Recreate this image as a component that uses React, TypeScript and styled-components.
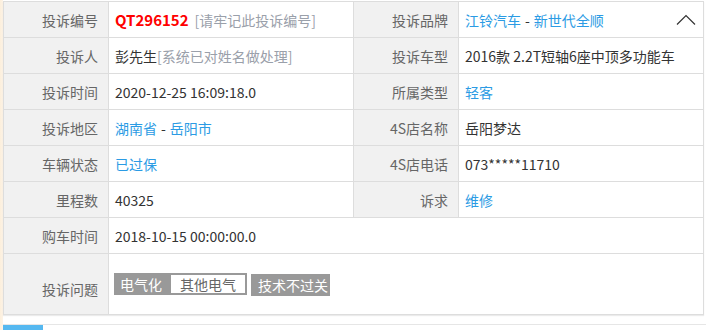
import React from "react";
import styled, { createGlobalStyle } from "styled-components";

const GlobalStyle = createGlobalStyle`
  html, body { margin: 0; padding: 0; background: #fff; }
  body { font-family: "Noto Sans CJK SC", "Microsoft YaHei", sans-serif; }
`;

const Page = styled.div`
  width: 706px;
  height: 330px;
  overflow: hidden;
  box-sizing: border-box;
  padding: 1px 0 0 3px;
  background: linear-gradient(to right, #fcefdc 0, #fdf3e6 3px, #ffffff 3px);
`;

const Table = styled.div`
  display: grid;
  grid-template-columns: 104px 244px 104px 244px;
  grid-template-rows: repeat(7, 35px) 60px;
  gap: 1px;
  width: fit-content;
  background: #dddddd;
  border: 1px solid #dddddd;
  box-shadow: 0 1px 1px rgba(0, 0, 0, 0.08);
`;

const Label = styled.div<{ $low?: boolean }>`
  display: flex;
  align-items: center;
  justify-content: flex-end;
  padding: ${(p) => (p.$low ? "9px 10px 0 0" : "0 10px 0 0")};
  background: #f1f1f1;
  color: #666;
  font-size: 14px;
  white-space: nowrap;
`;

const Value = styled.div<{ $span?: number }>`
  display: flex;
  align-items: center;
  padding: 0 0 0 6px;
  background: #fff;
  color: #333;
  font-size: 14px;
  white-space: nowrap;
  grid-column: ${(p) => (p.$span ? `span ${p.$span}` : "auto")};
`;

const Spread = styled(Value)`
  justify-content: space-between;
  padding-right: 7px;
`;

const Code = styled.span`
  color: #ff0000;
  font-weight: bold;
  font-size: 15px;
  margin-right: 6px;
`;

const Hint = styled.span`
  color: #9aa0aa;
`;

const Link = styled.span`
  color: #2b9be4;
`;

const Dash = styled.span`
  color: #333;
  margin: 0 4px;
`;

const Tags = styled.div`
  display: flex;
  align-items: center;
  gap: 4px;
  margin-left: -1px;
`;

const TagGroup = styled.div`
  display: inline-flex;
  align-items: stretch;
  padding: 2px;
  background: #999;
`;

const Seg = styled.span<{ $light?: boolean }>`
  display: inline-flex;
  align-items: center;
  height: 18px;
  font-size: 14px;
  line-height: 18px;
  padding: ${(p) => (p.$light ? "0 9px 0 9px" : "0 9px 0 4px")};
  background: ${(p) => (p.$light ? "#fff" : "transparent")};
  color: ${(p) => (p.$light ? "#666" : "#fff")};
`;

const Tag = styled.span`
  display: inline-flex;
  align-items: center;
  height: 22px;
  margin-top: 2px;
  padding: 0 2px 0 7px;
  background: #999;
  color: #fff;
  font-size: 14px;
`;

const TabBar = styled.div`
  margin-top: 9px;
  border-top: 1px solid #e6e6e6;
  height: 10px;
`;

const ActiveTab = styled.div`
  width: 40px;
  height: 6px;
  background: #55b8f0;
`;

const Chevron = () => (
  <svg width="20" height="13" viewBox="0 0 20 13" aria-hidden="true">
    <polyline points="1,11.5 10,2.5 19,11.5" fill="none" stroke="#333" strokeWidth="1.2" />
  </svg>
);

export default function App() {
  return (
    <>
      <GlobalStyle />
      <Page>
        <Table>
          <Label>投诉编号</Label>
          <Value>
            <Code>QT296152</Code>
            <Hint>[请牢记此投诉编号]</Hint>
          </Value>
          <Label>投诉品牌</Label>
          <Spread>
            <span>
              <Link>江铃汽车</Link>
              <Dash>-</Dash>
              <Link>新世代全顺</Link>
            </span>
            <Chevron />
          </Spread>

          <Label>投诉人</Label>
          <Value>
            彭先生<Hint>[系统已对姓名做处理]</Hint>
          </Value>
          <Label>投诉车型</Label>
          <Value>2016款 2.2T短轴6座中顶多功能车</Value>

          <Label>投诉时间</Label>
          <Value>2020-12-25 16:09:18.0</Value>
          <Label>所属类型</Label>
          <Value>
            <Link>轻客</Link>
          </Value>

          <Label>投诉地区</Label>
          <Value>
            <Link>湖南省</Link>
            <Dash>-</Dash>
            <Link>岳阳市</Link>
          </Value>
          <Label>4S店名称</Label>
          <Value>岳阳梦达</Value>

          <Label>车辆状态</Label>
          <Value>
            <Link>已过保</Link>
          </Value>
          <Label>4S店电话</Label>
          <Value>073*****11710</Value>

          <Label>里程数</Label>
          <Value>40325</Value>
          <Label>诉求</Label>
          <Value>
            <Link>维修</Link>
          </Value>

          <Label>购车时间</Label>
          <Value $span={3}>2018-10-15 00:00:00.0</Value>

          <Label $low>投诉问题</Label>
          <Value $span={3}>
            <Tags>
              <TagGroup>
                <Seg>电气化</Seg>
                <Seg $light>其他电气</Seg>
              </TagGroup>
              <Tag>技术不过关</Tag>
            </Tags>
          </Value>
        </Table>
        <TabBar>
          <ActiveTab />
        </TabBar>
      </Page>
    </>
  );
}
